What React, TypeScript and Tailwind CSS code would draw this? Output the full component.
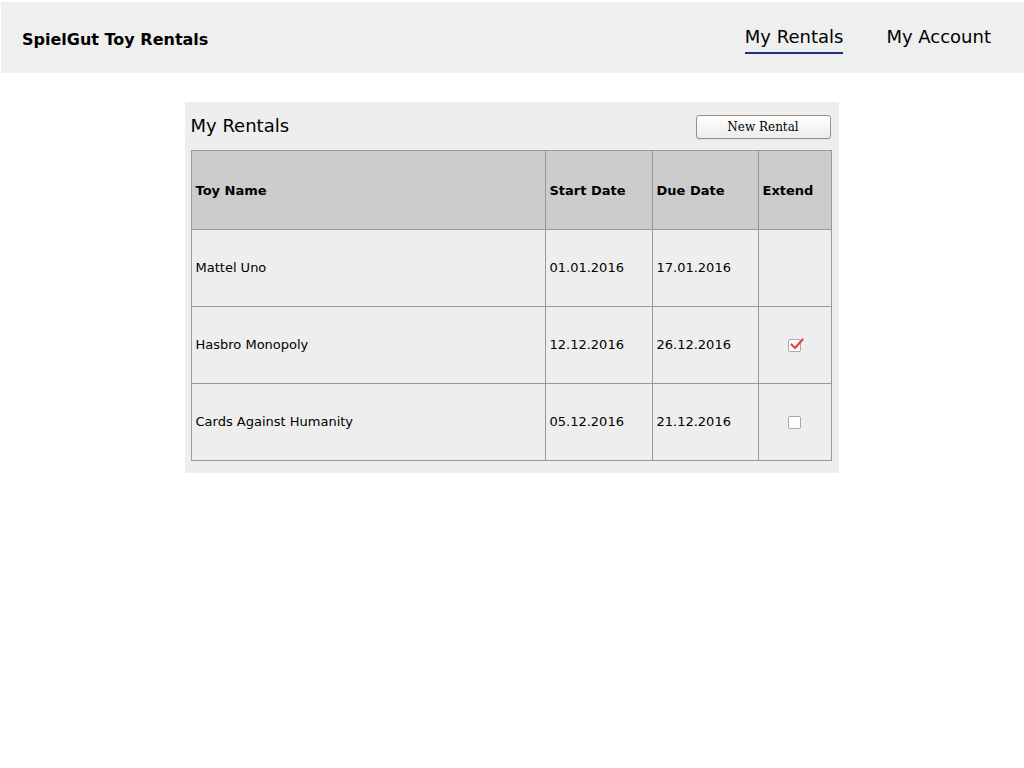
import { useState } from 'react'

type Rental = {
  id: number
  name: string
  start: string
  due: string
  extendable: boolean
  extend: boolean
}

const initialRentals: Rental[] = [
  { id: 1, name: 'Mattel Uno', start: '01.01.2016', due: '17.01.2016', extendable: false, extend: false },
  { id: 2, name: 'Hasbro Monopoly', start: '12.12.2016', due: '26.12.2016', extendable: true, extend: true },
  { id: 3, name: 'Cards Against Humanity', start: '05.12.2016', due: '21.12.2016', extendable: true, extend: false },
]

function ExtendBox({ checked, onChange }: { checked: boolean; onChange: () => void }) {
  return (
    <button
      onClick={onChange}
      className="relative flex h-[13px] w-[13px] items-center justify-center rounded-[2px] border border-[#a9a9a9] bg-white"
      aria-checked={checked}
      role="checkbox"
    >
      {checked && (
        <svg viewBox="0 0 14 12" className="absolute left-[1px] top-[-2px] h-[12px] w-[14px]">
          <path d="M1.5 6.5 L5 10 L12.5 1.5" fill="none" stroke="#e8433a" strokeWidth="2.2" strokeLinecap="round" strokeLinejoin="round" />
        </svg>
      )}
    </button>
  )
}

export default function App() {
  const [rentals, setRentals] = useState(initialRentals)

  const toggle = (id: number) =>
    setRentals((rs) => rs.map((r) => (r.id === id ? { ...r, extend: !r.extend } : r)))

  return (
    <div className="min-h-[768px] bg-white pl-[1px] pt-[2px] font-['DejaVu_Sans',sans-serif] text-black">
      <header className="flex h-[71px] items-center justify-between bg-[#efefef] pl-[21px] pr-[33px]">
        <div className="pt-[4px] text-[16px] font-bold">SpielGut Toy Rentals</div>
        <nav className="flex items-center gap-[43px] text-[18px]">
          <a className="relative pb-[2px] pt-[1px] border-b-2 border-[#1e3282]">My Rentals</a>
          <a className="pb-[2px] pt-[1px] border-b-2 border-transparent">My Account</a>
        </nav>
      </header>

      <main className="mx-auto mt-[29px] w-[654px] -translate-x-[1px] bg-[#eeeeee] px-[6px] pb-[12px] pt-[12px]">
        <div className="flex h-[24px] items-center justify-between">
          <h1 className="text-[18px] font-normal leading-none">My Rentals</h1>
          <button className="mr-[2px] mt-[2px] h-[24px] w-[135px] rounded-[3px] border border-[#a08c78] bg-gradient-to-b from-white to-[#ececec] font-['DejaVu_Serif',serif] text-[12px] shadow-[0_1px_0_rgba(0,0,0,0.05)]">
            New Rental
          </button>
        </div>
        <table className="mt-[12px] w-[641px] border-collapse text-[13px]">
          <thead>
            <tr className="h-[79px] bg-[#cccccc]">
              <th className="w-[354px] border border-[#999999] px-[4px] pt-[2px] text-left font-bold">Toy Name</th>
              <th className="w-[107px] border border-[#999999] px-[4px] pt-[2px] text-left font-bold">Start Date</th>
              <th className="w-[106px] border border-[#999999] px-[4px] pt-[2px] text-left font-bold">Due Date</th>
              <th className="border border-[#999999] px-[4px] pt-[2px] text-left font-bold">Extend</th>
            </tr>
          </thead>
          <tbody>
            {rentals.map((r) => (
              <tr key={r.id} className="h-[77px]">
                <td className="border border-[#999999] px-[4px]">{r.name}</td>
                <td className="border border-[#999999] px-[4px]">{r.start}</td>
                <td className="border border-[#999999] px-[4px]">{r.due}</td>
                <td className="border border-[#999999] px-[4px]">
                  {r.extendable && (
                    <div className="flex justify-center">
                      <ExtendBox checked={r.extend} onChange={() => toggle(r.id)} />
                    </div>
                  )}
                </td>
              </tr>
            ))}
          </tbody>
        </table>
      </main>
    </div>
  )
}
